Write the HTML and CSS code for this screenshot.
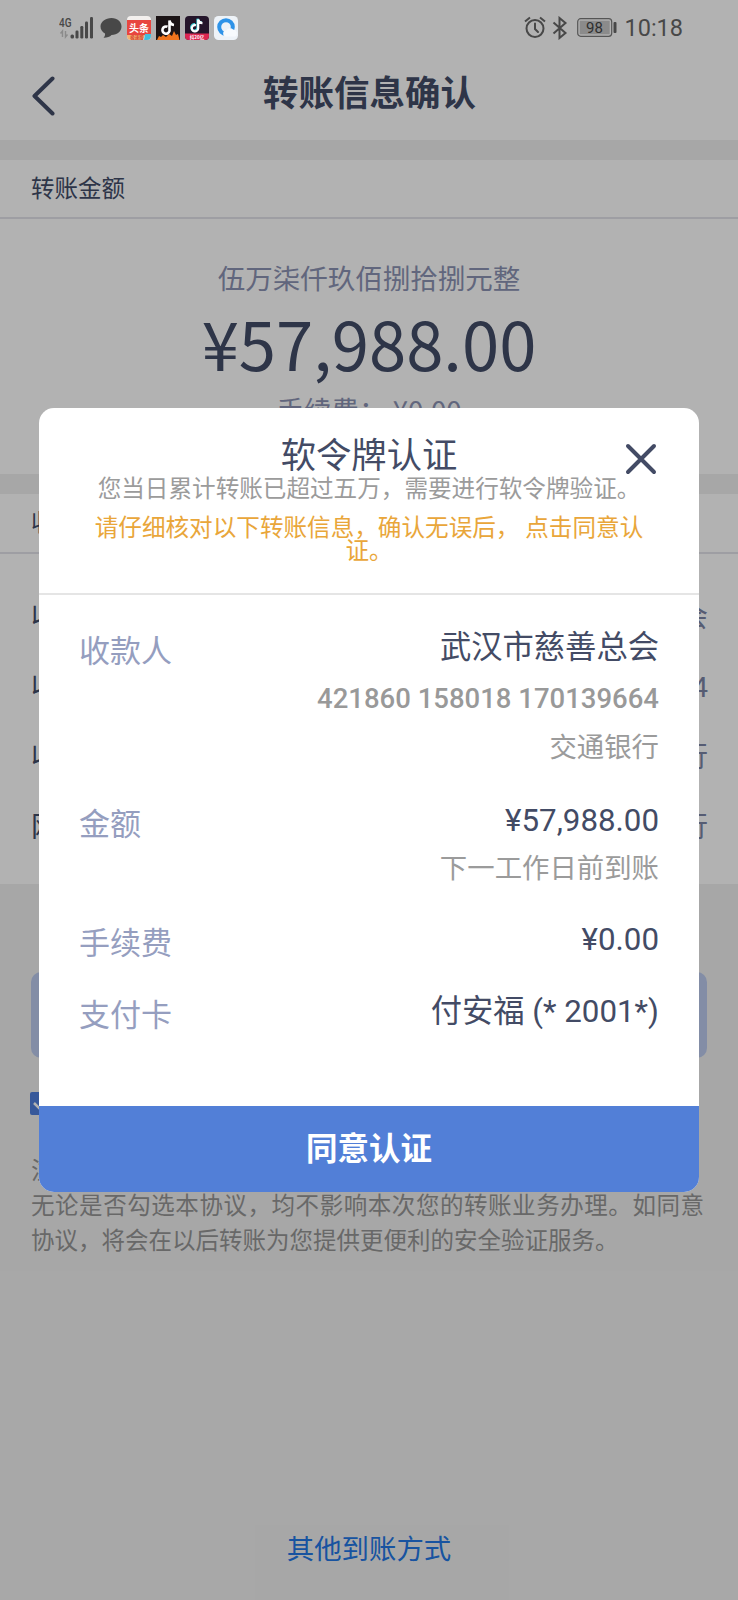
FILE: index.html
```html
<!DOCTYPE html>
<html lang="zh-CN">
<head>
<meta charset="utf-8">
<title>转账信息确认</title>
<link rel="stylesheet" href="styles.css">
</head>
<body>
<div class="screen">
  <header class="navbar">
    <svg class="back" width="24" height="40" viewBox="0 0 24 40"><path d="M20.500 2.500L2.500 20L20.500 37.500" fill="none" stroke="#424c68" stroke-width="4" stroke-linecap="round" stroke-linejoin="round"/></svg>
    <h1 class="page-title">转账信息确认</h1>
  </header>
  <section class="card amount-card">
    <h2 class="card-head">转账金额</h2>
    <div class="amount-cn">伍万柒仟玖佰捌拾捌元整</div>
    <div class="amount">¥57,988.00</div>
    <div class="fee">手续费： ¥0.00</div>
  </section>
  <section class="card payee-card">
    <h2 class="card-head">收款信息</h2>
    <div class="rows">
      <div class="row"><span>收款人</span><span class="val">武汉市慈善总会</span></div>
      <div class="row"><span>收款账号</span><span class="val">421860 158018 170139664</span></div>
      <div class="row"><span>收款银行</span><span class="val">交通银行</span></div>
      <div class="row"><span>网点</span><span class="val">交通银行</span></div>
    </div>
  </section>
  <div class="submit"></div>
  <div class="agree"><svg width="23" height="23" viewBox="0 0 23 23"><rect width="23" height="23" rx="2" fill="#4f7fdd"/><path d="M4 11l6 6L20 6" fill="none" stroke="#fff" stroke-width="2.500"/></svg></div>
  <p class="note">注：<br>无论是否勾选本协议，均不影响本次您的转账业务办理。如同意协议，将会在以后转账为您提供更便利的安全验证服务。</p>
  <a class="other">其他到账方式</a>
</div>
<div class="mask">
  <div class="modal">
    <div class="modal-head">
      <h2 class="modal-title">软令牌认证</h2>
      <p class="tip">您当日累计转账已超过五万，需要进行软令牌验证。</p>
      <p class="warn">请仔细核对以下转账信息，确认无误后， 点击同意认<br>证。</p>
      <svg class="close" width="32" height="32" viewBox="0 0 32 32"><path d="M3 3L29 29M29 3L3 29" stroke="#434b65" stroke-width="4" stroke-linecap="round"/></svg>
    </div>
    <div class="modal-body">
      <div class="item payee"><span class="label">收款人</span>
        <div class="info"><span class="main">武汉市慈善总会</span><span class="acct">421860 158018 170139664</span><span class="sub">交通银行</span></div></div>
      <div class="item money"><span class="label">金额</span>
        <div class="info"><span class="main">¥57,988.00</span><span class="sub">下一工作日前到账</span></div></div>
      <div class="item charge"><span class="label">手续费</span>
        <div class="info"><span class="main">¥0.00</span></div></div>
      <div class="item"><span class="label">支付卡</span>
        <div class="info"><span class="main">付安福 (* 2001*)</span></div></div>
    </div>
    <button class="confirm">同意认证</button>
  </div>
</div>
<div class="status">
  <div class="status-left">
    <svg width="36" height="26" viewBox="0 0 36 26">
      <text x="0" y="12" class="net" textLength="12.500" lengthAdjust="spacingAndGlyphs">4G</text>
      <path d="M3.500 22v-6l-2 2.500M6.500 16v6l2-2.500" fill="none" stroke="#8b8b8b" stroke-width="1.400"/>
      <g fill="#484848"><rect x="11.500" y="19.500" width="3.500" height="4" rx="1.500"/><rect x="16.500" y="15.500" width="3" height="8" rx="1.200"/><rect x="21.300" y="11" width="3" height="12.500" rx="1.200"/><rect x="26" y="6.500" width="3" height="17" rx="1.200"/><rect x="31" y="2" width="3" height="21.500" rx="1.200"/></g>
    </svg>
    <svg class="bubble" width="22" height="22" viewBox="0 0 22 22"><path d="M11.500 1C17.500 1 21.500 4.800 21.500 9.500S17.500 18 11.500 18C10 19.800 6.500 21 3.500 20.800C4.800 19.500 5.300 18 5 16.500C2.300 15 .5 12.500 .5 9.500C.5 4.800 5.500 1 11.500 1Z" fill="#484848"/></svg>
    <svg width="24" height="24" viewBox="0 0 24 24">
      <clipPath id="r1"><rect width="24" height="24" rx="4"/></clipPath>
      <g clip-path="url(#r1)"><rect width="24" height="24" fill="#f3f0ee"/><rect y="4" width="24" height="15" fill="#e8453f"/><path d="M0 19h18l-2 5H0z" fill="#f2b375"/><path d="M18 18h6v6h-7z" fill="#42bddb"/><text x="12" y="15.500" text-anchor="middle" class="tt">头条</text><text x="10" y="23" text-anchor="middle" class="tiny red">极速版</text></g>
    </svg>
    <svg width="24" height="24" viewBox="0 0 24 24">
      <rect width="24" height="24" fill="#1b1416"/><path d="M1 24L3 20L5 21L7 19L10 21L13 18L16 20L18 15L20 19L22 18L23.500 24Z" fill="#f0741d"/>
      <path d="M11.500 10.800A3.600 3.600 0 1 0 13.500 15V4.500C13.800 7 15.500 8.700 18 9" fill="none" stroke="#fff" stroke-width="2.600"/>
    </svg>
    <svg width="24" height="24" viewBox="0 0 24 24">
      <clipPath id="r2"><rect width="24" height="24" rx="4"/></clipPath>
      <g clip-path="url(#r2)"><rect width="24" height="24" fill="#24152a"/><path d="M0 17.500h24V24H0z" fill="#dc2751"/>
      <path d="M10 8.200A3.200 3.200 0 1 0 12.500 12V2.800C13 5 14.500 6.300 17 6.500" fill="none" stroke="#45d5dc" stroke-width="2.200"/>
      <path d="M11 9.200A3.200 3.200 0 1 0 13.200 12.500V3.500C13.700 5.700 15 7 17.500 7.200" fill="none" stroke="#fff" stroke-width="2.200"/>
      <text x="12" y="23" text-anchor="middle" class="tiny white">抖20亿</text></g>
    </svg>
    <svg width="24" height="24" viewBox="0 0 24 24">
      <rect width="24" height="24" rx="4.500" fill="#eef3f8"/><circle cx="12" cy="11" r="6.800" fill="none" stroke="#2e93e8" stroke-width="4"/>
      <path d="M12 20.500a3 3 0 0 1 .3-6a4.200 4.200 0 0 1 6.800-1a3.800 3.800 0 0 1 2 7z" fill="#f7fafd"/>
    </svg>
  </div>
  <div class="status-right">
    <svg width="22" height="24" viewBox="0 0 22 24"><g fill="none" stroke="#484848" stroke-width="2"><circle cx="11" cy="12.500" r="8.500"/><path d="M11 7.500V13L14 16" stroke-linecap="round"/><path d="M1 5.500L6 1.500M21 5.500L16 1.500" /></g></svg>
    <svg class="bt" width="16" height="24" viewBox="0 0 16 24"><path d="M1.500 6.500L13.500 17L7.500 22V2L13.500 7L1.500 17.500" fill="none" stroke="#484848" stroke-width="2"/></svg>
    <svg class="battery" width="40" height="20" viewBox="0 0 40 20"><rect x=".7" y=".7" width="34" height="17.600" rx="3" fill="none" stroke="#555" stroke-width="1.200"/><rect x="2.700" y="2.700" width="30" height="13.600" fill="#8b8b8b"/><rect x="36.500" y="4" width="3" height="11" rx="1" fill="#484848"/><text x="17.500" y="15.200" text-anchor="middle" class="pct">98</text></svg>
    <span class="time">10:18</span>
  </div>
</div>
</body>
</html>
```
FILE: styles.css
```css
* { box-sizing: border-box; }
body, h1, h2, p { margin: 0; font-weight: 400; }
body {
  width: 738px;
  height: 1600px;
  overflow: hidden;
  background: #f0f0f0;
  color: #424c68;
  font-family: Roboto, "Noto Sans CJK SC", sans-serif;
}
.screen {
  height: 1600px;
  display: flex;
  flex-direction: column;
  background: #f0f0f0;
}
.navbar {
  height: 140px;
  padding: 56px 32px 0;
  display: grid;
  grid-template-columns: 24px 1fr 24px;
  align-items: center;
  background: #fff;
  flex: none;
}
.back { margin-top: -4px; }
.page-title {
  font-size: 35.5px;
  line-height: 40px;
  font-weight: 700;
  text-align: center;
  margin-top: -8px;
  padding-left: 1px;
}
.card { background: #fff; margin-top: 20px; flex: none; }
.card-head {
  height: 59px;
  padding-left: 31px;
  font-size: 23.5px;
  line-height: 55px;
  border-bottom: 2px solid #e2e3ea;
}
.amount-card { height: 314px; text-align: center; font-family: "Noto Sans CJK SC", sans-serif; }
.amount-card .card-head { text-align: left; line-height: 54px; }
.amount-cn { margin-top: 38px; font-size: 27.500px; line-height: 40px; color: #8c93b3; }
.amount { font-size: 67px; line-height: 80px; margin-top: 5px; }
.fee { margin-top: 9px; font-size: 27.500px; line-height: 36px; color: #8c93b3; white-space: pre; }
.payee-card { height: 390px; }
.payee-card .card-head { height: 60px; line-height: 58px; }
.rows { padding: 28px 30px 0 31px; }
.row { height: 70px; line-height: 71px; display: flex; justify-content: space-between; font-size: 28px; }
.val { color: #7b84a5; }
.submit { height: 86px; margin: 88px 31px 0; border-radius: 10px; background: #bccbee; flex: none; }
.agree { margin: 34px 0 0 30px; height: 23px; flex: none; }
.agree svg { display: block; }
.note {
  margin: 39px 34px 0 31px;
  font-size: 23.5px;
  line-height: 35px;
  text-align: justify;
  color: #969696;
}
.other { margin-top: auto; padding-bottom: 30px; text-align: center; font-size: 27.400px; line-height: 40px; color: #2377e6; }
.mask {
  position: absolute;
  top: 0;
  left: 0;
  width: 738px;
  height: 1600px;
  padding: 408px 39px;
  background: rgba(0, 0, 0, .3);
}
.modal {
  height: 784px;
  display: flex;
  flex-direction: column;
  border-radius: 15px;
  overflow: hidden;
  background: #fff;
  color: #434b65;
}
.modal-head {
  position: relative;
  height: 187px;
  padding-top: 28px;
  text-align: center;
  border-bottom: 2px solid #e5e5e5;
}
.modal-title { font-size: 35.300px; line-height: 40px; }
.tip { font-size: 23.600px; line-height: 24px; color: #9b9b9b; margin-top: 1px; }
.warn { font-size: 23.600px; line-height: 23px; color: #e9a63a; margin-top: 16px; }
.close { position: absolute; top: 35px; right: 42px; }
.modal-body { flex: 1; padding: 33px 40px 0; }
.item { display: flex; justify-content: space-between; }
.label { font-size: 31px; line-height: 40px; color: #959ebf; margin-top: 4px; }
.info { display: flex; flex-direction: column; align-items: flex-end; }
.main { font-size: 31.300px; line-height: 40px; }
.sub { font-size: 27.400px; line-height: 40px; color: #9b9b9b; margin-top: 9px; }
.money .sub { margin-top: 8px; }
.acct { font-size: 27.500px; line-height: 40px; font-weight: 500; color: #999; margin-top: 11px; }
.payee { height: 173px; }
.money { height: 119px; }
.charge { height: 72px; }
.confirm {
  height: 86px;
  padding: 0 0 6px;
  border: 0;
  background: #527fd7;
  color: #fff;
  font: 700 31.500px/40px "Noto Sans CJK SC", sans-serif;
}
.status {
  position: absolute;
  top: 0;
  left: 0;
  width: 738px;
  height: 56px;
  padding: 0 55px 0 59px;
  display: flex;
  justify-content: space-between;
  align-items: center;
  color: #484848;
}
.status-left, .status-right { display: flex; align-items: center; }
.status-left { gap: 5px; }
.bubble { margin-right: 0; }
.bt { margin-left: 6px; }
.battery { margin-left: 9px; }
.time { font-size: 23.500px; line-height: 28px; margin-left: 7px; }
.net { font: 500 13px Roboto, sans-serif; fill: #484848; }
.pct { font: 400 15px Roboto, sans-serif; fill: #2f2f2f; }
.tt { font: 700 10px "Noto Sans CJK SC", sans-serif; fill: #fff; }
.tiny { font: 700 4.500px "Noto Sans CJK SC", sans-serif; }
.red { fill: #d8452f; }
.white { fill: #fff; }
```
